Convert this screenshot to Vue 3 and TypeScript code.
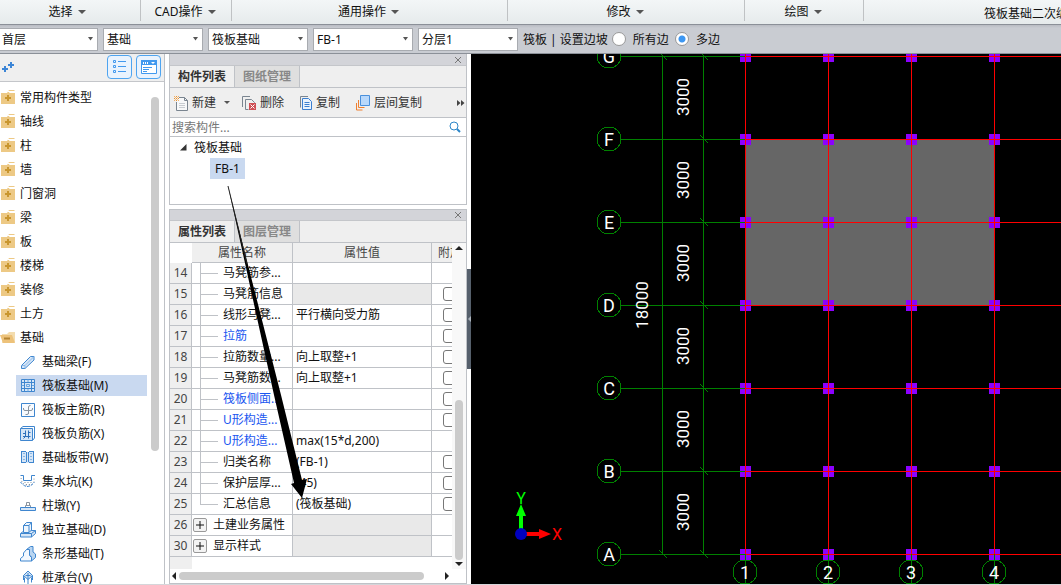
<script setup lang="ts">
import { ref } from 'vue'

interface Shape { d: string; fill?: string; stroke?: string; dash?: string }
interface Row { no: number; name: string; value?: string; link?: boolean; muted?: boolean; check?: boolean; group?: boolean; last?: boolean }

const menus = [
  { label: '选择', cls: 'm-select' },
  { label: 'CAD操作', cls: 'm-cad' },
  { label: '通用操作', cls: 'm-common' },
  { label: '修改', cls: 'm-modify' },
  { label: '绘图', cls: 'm-draw' }
]

const combos = [
  { label: '楼层', value: '首层' },
  { label: '分类', value: '基础' },
  { label: '构件类型', value: '筏板基础' },
  { label: '构件', value: 'FB-1' },
  { label: '分层', value: '分层1' }
]

const slope = ref('multi')
const keyword = ref('')

const folders = ['常用构件类型', '轴线', '柱', '墙', '门窗洞', '梁', '板', '楼梯', '装修', '土方']

const B = '#3f86cf'
const L = '#d6e6f7'
const G = '#8a949e'
const kinds: { name: string; active?: boolean; icon: Shape[] }[] = [
  { name: '基础梁(F)', icon: [
    { d: 'M1.5 11.5L10.5 2.5H14V6L5 14.500H1.500z', fill: L, stroke: B },
    { d: 'M1.500 11.500H5V14.500M5 11.500L14 2.500', stroke: '#8ab8e8' }] },
  { name: '筏板基础(M)', active: true, icon: [
    { d: 'M1.500 1.500H14.500V13.500H1.500z', fill: L, stroke: B },
    { d: 'M4.500 1V14M11.500 1V14M1 4.500H15M1 10.500H15', stroke: B },
    { d: 'M6.500 6.500H9.500V8.500H6.500zM8 1.500V4M8 11V13.500M1.500 7.500H4M12 7.500H14.500', stroke: '#6aa5e0' }] },
  { name: '筏板主筋(R)', icon: [
    { d: 'M1.500 1.500H14.500V14.500H1.500z', fill: '#f8fbff', stroke: B },
    { d: 'M8.500 12V5Q8.500 3.500 10.500 3.500M5.500 12.500H7Q8.500 12.500 8.500 11M3.500 6V7Q3.500 8.500 5 8.500H11Q12.500 8.500 12.500 7V6', stroke: G }] },
  { name: '筏板负筋(X)', icon: [
    { d: 'M0.500 2.500L3 0.500H14.500V12L12.500 14.500', stroke: B },
    { d: 'M0.500 2.500H12.500V14.500H0.500z', fill: L, stroke: B },
    { d: 'M5.500 4.500V10.500L3.500 12.500M8.500 4.500V12.500M3 7.500H6M8 6.500H10.500M3 10.500H10.500', stroke: '#2e70ba' }] },
  { name: '基础板带(W)', icon: [
    { d: 'M1 2H14V13H1z', fill: L },
    { d: 'M1 1.500H6M9 1.500H14M1 12.500H6M9 12.500H14M1.500 2V12M6.500 2V12M8.500 2V12M13.500 2V12', stroke: B },
    { d: 'M4 3V12M11 3V12', stroke: B, dash: '1 2' }] },
  { name: '集水坑(K)', icon: [
    { d: 'M0.500 1.500H3.500V6.500H11.500V1.500H15', stroke: B },
    { d: 'M1 4L2 8L5 11H11L14 8V4', stroke: G, dash: '1 2' },
    { d: 'M4.500 8.500H12M6 10.500H11', stroke: G, dash: '1 2' },
    { d: 'M0.500 8Q7.500 17 14.500 8', stroke: B, dash: '3 1' }] },
  { name: '柱墩(Y)', icon: [
    { d: 'M0.500 9.500H15.500V12.500H0.500z', fill: L, stroke: B },
    { d: 'M5.500 9V7.500H10.500V9M6.500 7V4.500H9.500V7', stroke: G }] },
  { name: '独立基础(D)', icon: [
    { d: 'M0.500 11.500L4.500 8.500H15.500V11.500L11.500 15H0.500z', fill: L, stroke: B },
    { d: 'M3.500 3.500L6.500 0.500H11.500V8L9 10.500H3.500z', fill: '#edf5fd', stroke: B },
    { d: 'M3.500 3.500H9V10.500M9 3.500L11.500 0.500M1 11.500H11.500L15.500 8.500M11.500 11.500V15', stroke: B }] },
  { name: '条形基础(T)', icon: [
    { d: 'M6.500 3.500L10.500 0.500H13V6L15.500 8V11.500L11.500 15V11L9.500 9z', fill: '#b9d5f1', stroke: B },
    { d: 'M0.500 15V12.500L3.500 10V7L6.500 3.500H9.500V9.500L11.500 11.500V15z', fill: '#f3f8fe', stroke: B }] },
  { name: '桩承台(V)', icon: [
    { d: 'M8 1L12.500 5.500L8 9.500L3.500 5.500z', fill: L, stroke: B },
    { d: 'M8 3V15M5.500 5.500H10.500M4.500 7.500V12.500M11.500 7.500V12.500M3.500 5.500V10M12.500 5.500V10', stroke: B }] }
]

const rows: Row[] = [
  { no: 14, name: '马凳筋参...' },
  { no: 15, name: '马凳筋信息', muted: true, check: true },
  { no: 16, name: '线形马凳...', value: '平行横向受力筋', check: true },
  { no: 17, name: '拉筋', link: true, check: true },
  { no: 18, name: '拉筋数量...', value: '向上取整+1', check: true },
  { no: 19, name: '马凳筋数...', value: '向上取整+1', check: true },
  { no: 20, name: '筏板侧面...', link: true, check: true },
  { no: 21, name: 'U形构造...', link: true, check: true },
  { no: 22, name: 'U形构造...', value: 'max(15*d,200)', link: true },
  { no: 23, name: '归类名称', value: '(FB-1)', check: true },
  { no: 24, name: '保护层厚...', value: '(45)', check: true },
  { no: 25, name: '汇总信息', value: '(筏板基础)', check: true, last: true },
  { no: 26, name: '土建业务属性', group: true, muted: true },
  { no: 30, name: '显示样式', group: true, muted: true }
]

// Plan geometry, in canvas pixels
const bay = 83
const x0 = 274
const y0 = 2
const axisLetters = ['G', 'F', 'E', 'D', 'C', 'B', 'A'].map((t, i) => ({ t, y: y0 + i * bay }))
const axisNumbers = ['1', '2', '3', '4'].map((t, i) => ({ t, x: x0 + i * bay }))
const yEnd = y0 + 6 * bay
</script>

<template>
  <div class="app">
    <nav class="ribbon">
      <div v-for="m in menus" :key="m.label" class="group" :class="m.cls">
        <button type="button">{{ m.label }}<svg width="8" height="4" viewBox="0 0 8 4"><path d="M0 0H8L4 4z" fill="#555" /></svg></button>
      </div>
      <div class="group m-edit"><button type="button">筏板基础二次编辑</button></div>
    </nav>

    <div class="options">
      <div v-for="c in combos" :key="c.label" class="combo">
        <select :aria-label="c.label"><option>{{ c.value }}</option></select>
        <svg width="5" height="4" viewBox="0 0 5 4"><path d="M0 0H5L2.500 3.500z" fill="#555" /></svg>
      </div>
      <span class="hint">筏板 | 设置边坡</span>
      <label><input v-model="slope" type="radio" name="slope" value="all" /><span>所有边</span></label>
      <label><input v-model="slope" type="radio" name="slope" value="multi" /><span>多边</span></label>
    </div>

    <div class="work">
      <aside class="nav">
        <div class="nav-head">
          <svg class="plus" width="14" height="14" viewBox="0 0 14 14"><path d="M9 2V8M6 5H12" stroke="#3c85d6" stroke-width="2" /><path d="M3 6V12M0 9H6" stroke="#3c85d6" stroke-width="2" /></svg>
          <button type="button" aria-label="列表视图">
            <svg width="14" height="14" viewBox="0 0 14 14" fill="none" stroke="#4199ef"><path d="M0.500 0.500H2.500V2.500H0.500zM0.500 5.500H2.500V7.500H0.500zM0.500 10.500H2.500V12.500H0.500zM5 1.500H13M5 6.500H13M5 11.500H13" /></svg>
          </button>
          <button type="button" aria-label="窗口视图">
            <svg width="16" height="14" viewBox="0 0 16 14"><path d="M0.500 0.500H15.500V13.500H0.500z" fill="#fff" stroke="#4199ef" /><path d="M0 0H16V5H0z" fill="#4199ef" /><path d="M2 2H3V4H2zM4 2H5V4H4zM6 2H7V4H6zM10 2H14L12 4z" fill="#fff" /><path d="M2 7.500H11M2 9.500H8M2 11.500H6" stroke="#4199ef" /></svg>
          </button>
        </div>
        <div class="nav-body">
          <ul>
            <li v-for="f in folders" :key="f" class="folder">
              <svg width="16" height="16" viewBox="0 0 16 16"><path d="M1 3H7L9 0H14.500V2H9.500L9 3H15V14H1z" fill="#edc985" /><path d="M8 1.500H15" stroke="#fff" /><path d="M8 5V11M5 8H11" stroke="#c9962f" stroke-width="2" /></svg>
              <span>{{ f }}</span>
            </li>
            <li class="folder">
              <svg width="16" height="16" viewBox="0 0 16 16"><path d="M2 13V4H7L9 2H15V12z" fill="#f3dcae" /><path d="M0 5H12L15 13H3z" fill="#edc27a" /><path d="M4 8.500H10" stroke="#b58532" stroke-width="2" /></svg>
              <span>基础</span>
            </li>
            <li v-for="k in kinds" :key="k.name" class="kind" :class="{ active: k.active }">
              <svg width="16" height="16" viewBox="0 0 16 16"><path v-for="(s, i) in k.icon" :key="i" :d="s.d" :fill="s.fill ?? 'none'" :stroke="s.stroke ?? 'none'" :stroke-dasharray="s.dash" /></svg>
              <span>{{ k.name }}</span>
            </li>
          </ul>
          <div class="nav-scroll"></div>
        </div>
      </aside>

      <section class="docks">
        <div class="dock list-dock">
          <div class="dock-title"><button type="button" aria-label="关闭"><svg width="6" height="6" viewBox="0 0 6 6"><path d="M0 0L6 6M6 0L0 6" stroke="#777" /></svg></button></div>
          <div class="tabs"><button type="button" class="on">构件列表</button><button type="button">图纸管理</button></div>
          <div class="tools">
            <button type="button" class="t-new">
              <svg width="16" height="16" viewBox="0 0 16 16" fill="none"><path d="M6 2.500H11.500L14.500 5.500V15.500H3.500V7" fill="#f7f8f9" stroke="#7a8590" /><path d="M11.500 2.500V5.500H14.500" stroke="#7a8590" /><path d="M6 8.500H12M6 10.500H12M6 12.500H12" stroke="#c8ccd1" /><path d="M1 1L6 6M6 1L1 6M3.500 1V6M1 3.500H6" stroke="#f0942c" stroke-dasharray="1 1" /></svg>新建
              <svg class="caret" width="6" height="4" viewBox="0 0 6 4"><path d="M0 0H6L3 3z" fill="#555" /></svg>
            </button>
            <button type="button" class="t-del">
              <svg width="16" height="16" viewBox="0 0 16 16" fill="none"><path d="M1.500 12V1.500H9" stroke="#7a8590" /><path d="M7.500 14.500H4.500V4.500H10.500L13.500 7.500V8" stroke="#7a8590" /><path d="M8 8H15V15H8z" fill="#cf4f55" /><path d="M9.500 9.500L13.500 13.500M13.500 9.500L9.500 13.500" stroke="#fff" /></svg>删除
            </button>
            <button type="button" class="t-copy">
              <svg width="14" height="16" viewBox="0 0 14 16" fill="none"><path d="M1.500 12.500V1.500H9" stroke="#7a8590" /><path d="M3.500 3.500H9.500L12.500 6.500V14.500H3.500z" fill="#eaf3fd" stroke="#3c7fd0" /><path d="M5.500 7.500H10.500M5.500 9.500H10.500M5.500 11.500H10.500" stroke="#3c7fd0" /></svg>复制
            </button>
            <button type="button" class="t-layer">
              <svg width="16" height="16" viewBox="0 0 16 16" fill="none"><path d="M5.500 0.500H14.500V10.500H5.500z" fill="#b8d8fb" stroke="#4a90dc" /><path d="M3.500 5V12.500H9.500M1.500 8V15H7.500" stroke="#ef8030" /></svg>层间复制
            </button>
            <button type="button" class="t-more" aria-label="更多"><svg width="8" height="6" viewBox="0 0 8 6"><path d="M0 0L3.500 3L0 6zM4 0L7.500 3L4 6z" fill="#444" /></svg></button>
          </div>
          <div class="search">
            <input v-model="keyword" type="text" placeholder="搜索构件..." aria-label="搜索构件" />
            <button type="button" aria-label="搜索"><svg width="12" height="12" viewBox="0 0 12 12"><circle cx="5" cy="5" r="4" fill="none" stroke="#2c86c8" /><path d="M8 8L11 11" stroke="#2c86c8" stroke-width="2" /></svg></button>
          </div>
          <div class="tree">
            <div class="tree-root"><svg width="7" height="7" viewBox="0 0 7 7"><path d="M6.500 0V6.500H0z" fill="#333" /></svg>筏板基础</div>
            <div class="tree-leaf">FB-1</div>
          </div>
        </div>

        <div class="dock prop-dock">
          <div class="dock-title"><button type="button" aria-label="关闭"><svg width="6" height="6" viewBox="0 0 6 6"><path d="M0 0L6 6M6 0L0 6" stroke="#777" /></svg></button></div>
          <div class="tabs"><button type="button" class="on">属性列表</button><button type="button">图层管理</button></div>
          <div class="sheet">
            <div class="sheet-view">
              <table>
                <colgroup><col class="c-no" /><col class="c-name" /><col class="c-val" /><col class="c-extra" /></colgroup>
                <thead><tr><th class="blank"></th><th>属性名称</th><th>属性值</th><th class="extra">附加</th></tr></thead>
                <tbody>
                  <tr v-for="r in rows" :key="r.no">
                    <td class="no">{{ r.no }}</td>
                    <td>
                      <div class="name" :class="{ link: r.link }">
                        <button v-if="r.group" type="button" class="expand" :aria-label="'展开' + r.name"><svg width="8" height="8" viewBox="0 0 8 8"><path d="M0 4H8M4 0V8" stroke="#111" /></svg></button>
                        <i v-else class="branch" :class="{ last: r.last }"></i>
                        <span>{{ r.name }}</span>
                      </div>
                    </td>
                    <td class="val" :class="{ muted: r.muted }">{{ r.value }}</td>
                    <td class="extra"><input v-if="r.check" type="checkbox" :aria-label="r.name + '附加'" /></td>
                  </tr>
                </tbody>
              </table>
              <div class="gutter"></div>
            </div>
            <div class="vbar">
              <svg width="8" height="4" viewBox="0 0 8 4"><path d="M0 4L4 0L8 4z" fill="#222" /></svg>
              <span></span>
              <svg width="8" height="4" viewBox="0 0 8 4"><path d="M0 0H8L4 4z" fill="#222" /></svg>
            </div>
          </div>
          <div class="hbar">
            <svg width="4" height="8" viewBox="0 0 4 8"><path d="M4 0V8L0 4z" fill="#222" /></svg>
            <span></span>
            <svg width="4" height="8" viewBox="0 0 4 8"><path d="M0 0V8L4 4z" fill="#222" /></svg>
          </div>
        </div>

        <svg class="pointer"><path d="M59 132L112 341L133 426L138 425L133 444L122 430L125 429L105 341z" fill="#000" /><path d="M59 132L78 210" stroke="#222" /></svg>
      </section>

      <div class="splitter"><button type="button" aria-label="折叠面板"><svg width="3" height="6" viewBox="0 0 3 6"><path d="M3 0V6L0 3z" fill="#aab2bb" /></svg></button></div>

      <main class="canvas">
        <svg class="plan" role="img" aria-label="筏板基础平面图">
          <rect :x="x0" :y="y0 + bay" :width="3 * bay" :height="2 * bay" fill="#666" />
          <template v-for="a in axisNumbers" :key="'c' + a.t">
            <rect v-for="b in axisLetters" :key="b.t" :x="a.x - 5" :y="b.y - 5" width="11" height="11" fill="#8c00ff" />
          </template>
          <g class="red">
            <rect v-for="b in axisLetters" :key="b.t" :x="x0" :y="b.y" width="100%" height="1" />
            <rect v-for="a in axisNumbers" :key="a.t" :x="a.x" y="0" width="1" :height="yEnd" />
          </g>
          <g class="green">
            <rect v-for="b in axisLetters" :key="b.t" x="150" :y="b.y" width="124" height="1" />
            <rect v-for="a in axisNumbers" :key="a.t" :x="a.x" :y="yEnd" width="1" height="30" />
            <rect x="191" :y="y0" width="1" :height="6 * bay" />
            <rect x="232" :y="y0" width="1" :height="6 * bay" />
          </g>
          <g class="outline">
            <path v-for="b in axisLetters" :key="'t' + b.t" :d="`M229 ${b.y - 4}l8 8`" />
            <path :d="`M188 ${y0 - 4}l8 8M188 ${yEnd - 4}l8 8`" />
            <circle v-for="b in axisLetters" :key="b.t" cx="138" :cy="b.y" r="12" />
            <circle v-for="a in axisNumbers" :key="a.t" :cx="a.x" cy="518" r="12" />
          </g>
          <g class="axis-text">
            <text v-for="b in axisLetters" :key="b.t" x="138" :y="b.y + 7">{{ b.t }}</text>
            <text v-for="a in axisNumbers" :key="a.t" :x="a.x" y="525">{{ a.t }}</text>
          </g>
          <g class="dim-text">
            <text v-for="i in 6" :key="i" :transform="`translate(218 ${i * bay - 40}) rotate(-90)`">3000</text>
            <text :transform="`translate(177 ${y0 + 3 * bay}) rotate(-90)`">18000</text>
          </g>
          <g class="ucs">
            <path d="M48 476V462H45L50 450L55 462H52V476z" fill="#0f0" />
            <path d="M55 478H68V475L80 480L68 485V482H55z" fill="#f00" />
            <circle cx="50" cy="480" r="6" fill="#0000c0" />
            <text x="50" y="450" fill="#0f0">Y</text>
            <text x="86" y="486" fill="#f00">X</text>
          </g>
        </svg>
      </main>
    </div>
  </div>
</template>

<style>
body { margin: 0; background: #fff; }
</style>

<style scoped>
.app { display: flex; flex-direction: column; height: 100vh; overflow: hidden; box-sizing: border-box; border-bottom: 1px solid #d5d6da; font: 12px/16px "Noto Sans", "Noto Sans CJK SC", sans-serif; color: #111; }
button, input, select { font: inherit; color: inherit; margin: 0; padding: 0; border: 0; background: none; }
svg { display: block; flex: none; }

.ribbon { display: flex; flex: none; height: 24px; background: linear-gradient(#f3f6f7, #e6ebec); border-bottom: 1px solid #8b9098; overflow: hidden; }
.group { box-sizing: border-box; flex: none; height: 21px; display: flex; justify-content: center; align-items: center; border-right: 1px solid #bfc2c4; white-space: nowrap; }
.group button { display: flex; align-items: center; gap: 5px; padding-top: 3px; }
.m-select { width: 141px; padding-right: 6px; }
.m-cad { width: 91px; padding-right: 2px; }
.m-common { width: 276px; padding-right: 2px; }
.m-modify { width: 237px; padding-right: 2px; }
.m-draw { width: 119px; padding-right: 2px; }
.m-edit { flex: 1; height: 24px; justify-content: flex-start; padding-left: 120px; border: 0; overflow: hidden; }

.options { display: flex; flex: none; align-items: center; height: 28px; background: linear-gradient(#b9bcc3, #c9ccd2 3px); border-bottom: 1px solid #8b9098; white-space: nowrap; }
.combo { box-sizing: border-box; display: grid; align-items: center; width: 100px; height: 23px; margin-right: 5px; background: #fff; border: 1px solid #a8abb0; }
.combo:first-child { width: 98px; border-left: 0; }
.combo select { grid-area: 1 / 1; appearance: none; width: 100%; height: 21px; padding: 1px 0 0 3px; outline: 0; }
.combo:first-child select { padding-left: 2px; }
.combo svg { grid-area: 1 / 1; justify-self: end; margin-right: 4px; pointer-events: none; }
.hint { margin-right: 4px; padding-top: 2px; }
.options label { display: flex; align-items: center; gap: 7px; margin-right: 6px; }
.options label span { padding-top: 2px; }
.options input { appearance: none; box-sizing: border-box; width: 14px; height: 14px; border: 1px solid #999; border-radius: 50%; background: #fff; }
.options input:checked { background: radial-gradient(circle, #3d97f2 3px, #fff 4px); }

.work { display: flex; flex: 1; min-height: 0; }
.nav { box-sizing: border-box; flex: none; display: flex; flex-direction: column; width: 165px; border-right: 1px solid #bfc2c7; margin-right: 4px; }
.nav-head { box-sizing: border-box; display: flex; flex: none; align-items: center; gap: 4px; height: 28px; padding: 0 3px 2px 2px; background: #efefef; border-bottom: 1px solid #c4c6ca; }
.nav-head .plus { margin-right: auto; }
.nav-head button { box-sizing: border-box; display: grid; place-items: center; width: 25px; height: 24px; border: 1px solid #4ea4f0; border-radius: 4px; background: #e9f3fe; }
.nav-body { display: flex; flex: 1; min-height: 0; overflow: hidden; padding-top: 3px; }
ul { flex: 1; list-style: none; margin: 0; padding: 0; }
li { display: flex; align-items: center; height: 21px; margin: 2px 0 3px; white-space: nowrap; }
.folder { gap: 4px; }
.kind { gap: 6px; margin-left: 16px; padding-left: 4px; }
.kind.active { background: #c9d9f0; }
.nav-scroll { width: 8px; height: 71%; margin: 12px 5px 0 4px; border-radius: 4px; background: #cbcbcb; }

.docks { position: relative; flex: none; display: flex; flex-direction: column; gap: 4px; width: 298px; }
.dock { display: flex; flex-direction: column; border: 1px solid #bfc2c7; }
.list-dock { flex: none; border-top: 0; }
.prop-dock { flex: 1; min-height: 0; }
.dock-title { display: flex; flex: none; justify-content: flex-end; align-items: center; height: 11px; padding-right: 5px; background: #d3d4d9; border-bottom: 1px solid #c4c6ca; }
.prop-dock .dock-title { height: 10px; }
.tabs { display: flex; flex: none; height: 21px; background: #efefef; border-bottom: 1px solid #bfc2c7; }
.tabs button { box-sizing: border-box; width: 65px; border-right: 1px solid #bfc2c7; background: #dfdfdf; color: #888; font-weight: bold; }
.tabs .on { background: #efefef; color: #333; }
.tools { display: flex; flex: none; align-items: center; height: 29px; padding: 0 1px 0 3px; background: #efefef; border-bottom: 1px solid #bfc2c7; color: #333; white-space: nowrap; }
.tools button { display: flex; align-items: center; gap: 3px; }
.t-new { margin-right: 11px; }
.t-new .caret { margin-left: 5px; }
.t-del { margin-right: 15px; }
.t-copy { margin-right: 15px; }
.t-more { margin-left: auto; }
.search { display: flex; flex: none; height: 18px; align-items: center; padding: 0 5px 0 2px; border-bottom: 1px solid #bfc2c7; }
.search input { flex: 1; min-width: 0; height: 18px; outline: 0; }
.search input::placeholder { color: #777; opacity: 1; }
.tree { height: 67px; }
.tree-root { display: flex; align-items: center; gap: 7px; height: 21px; padding-left: 10px; }
.tree-leaf { width: 35px; height: 21px; margin-left: 40px; line-height: 21px; text-align: center; background: #c9d9f0; }

.sheet { display: flex; flex: 1; min-height: 0; }
.sheet-view { flex: 1; min-width: 0; display: flex; flex-direction: column; overflow: hidden; }
table { flex: none; width: 302px; table-layout: fixed; border-collapse: separate; border-spacing: 0; }
.c-no { width: 22px; }
.c-name { width: 101px; }
.c-val { width: 139px; }
.c-extra { width: 40px; }
th, td { box-sizing: border-box; height: 21px; padding: 0; border-right: 1px solid #bfc2c7; border-bottom: 1px solid #bfc2c7; white-space: nowrap; overflow: hidden; line-height: 16px; }
th { height: 20px; font-weight: normal; color: #444; background: #efefef; }
th.blank { background: #fff; border-color: #fff; }
th.extra { text-align: left; padding-left: 6px; }
td.no { background: #efefef; color: #444; text-align: center; }
td.val { padding-left: 3px; }
td.muted { background: #e9e9e9; }
td.extra { padding-left: 11px; }
td.extra input { appearance: none; display: block; box-sizing: border-box; width: 14px; height: 14px; border: 1px solid #777; border-radius: 3px; background: #fff; }
.name { display: flex; align-items: center; height: 20px; }
.name.link { color: #1a56f0; }
.branch { width: 18px; height: 20px; margin: 0 5px 0 8px; background: linear-gradient(#bfc2c7, #bfc2c7) 0 0 / 1px 20px no-repeat, linear-gradient(#bfc2c7, #bfc2c7) 0 10px / 18px 1px no-repeat; }
.branch.last { background-size: 1px 10px, 18px 1px; }
.expand { box-sizing: border-box; display: grid; place-items: center; width: 14px; height: 14px; margin: 0 6px 0 1px; border: 1px solid #999; border-radius: 2px; background: #f3f3f3; }
.gutter { box-sizing: border-box; flex: 1; width: 22px; background: #efefef; }
.vbar { display: flex; flex: none; flex-direction: column; align-items: center; width: 14px; padding: 3px 0; background: #f8f8f8; }
.vbar span { width: 8px; height: 160px; margin: auto 0 2px; border-radius: 4px; background: #cbcbcb; }
.hbar { display: flex; flex: none; align-items: center; height: 14px; padding: 0 17px 0 2px; background: #fff; }
.hbar span { flex: 1; height: 8px; margin: 0 21px 0 3px; border-radius: 4px; background: #cbcbcb; }
.pointer { position: absolute; inset: 0; width: 100%; height: 100%; pointer-events: none; }

.splitter { display: flex; flex: none; align-items: center; width: 4px; background: #fff; }
.splitter button { display: grid; place-items: center; width: 4px; height: 100px; background: #56606c; }

.canvas { flex: 1; min-width: 0; background: #000; overflow: hidden; }
.plan { width: 100%; height: 100%; }
.plan rect { shape-rendering: crispEdges; }
.red { fill: #f00; }
.green { fill: #008000; }
.outline { fill: none; stroke: #008000; shape-rendering: crispEdges; }
.axis-text, .dim-text { fill: #fff; text-anchor: middle; font-family: Roboto, sans-serif; }
.axis-text { font-size: 18px; }
.dim-text { font-size: 17px; }
.ucs text { font: 16px Roboto, sans-serif; text-anchor: middle; }
</style>
